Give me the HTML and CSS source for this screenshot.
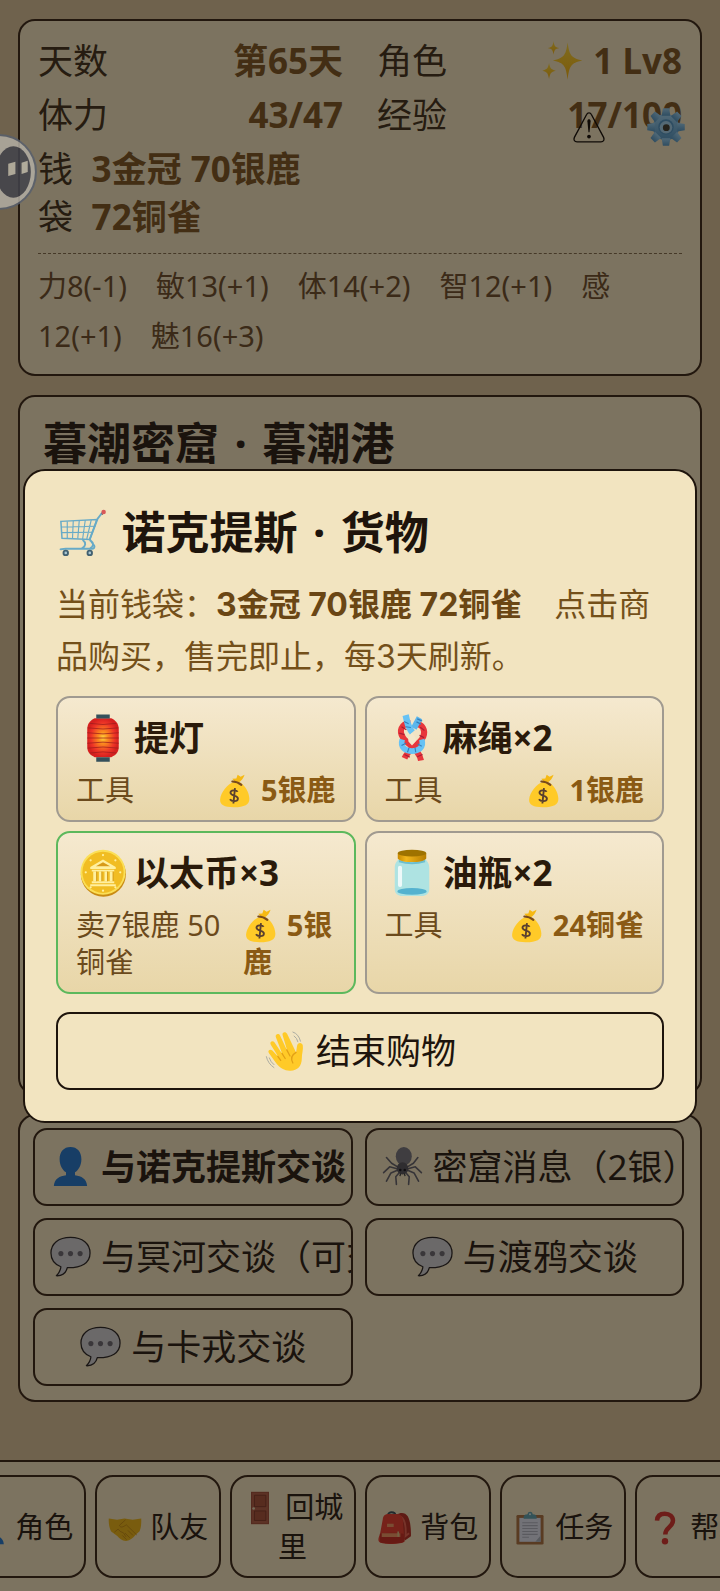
FILE: index.html
```html
<!DOCTYPE html>
<html lang="zh-CN">
<head>
<meta charset="utf-8">
<meta name="viewport" content="width=device-width, initial-scale=1">
<title>诺克提斯 · 货物</title>
<link rel="stylesheet" href="styles.css">
</head>
<body>
<svg class="sprite" aria-hidden="true">
  <defs>
    <linearGradient id="g-star" x1="0" y1="0" x2="0" y2="1"><stop offset="0" stop-color="#ffd83d"/><stop offset="1" stop-color="#f9b515"/></linearGradient>
    <radialGradient id="g-lamp"><stop offset="0" stop-color="#ffd23c"/><stop offset=".3" stop-color="#fb8c1e"/><stop offset=".75" stop-color="#ee3527"/><stop offset="1" stop-color="#d5201f"/></radialGradient>
    <linearGradient id="g-lid" x1="0" y1="0" x2="1" y2="0"><stop offset="0" stop-color="#c98a00"/><stop offset=".3" stop-color="#f2b61c"/><stop offset="1" stop-color="#b57c00"/></linearGradient>
    <linearGradient id="g-gear" x1="0" y1="0" x2="0" y2="1"><stop offset="0" stop-color="#a2d2ee"/><stop offset="1" stop-color="#5d9bc4"/></linearGradient>
  </defs>
  <symbol id="sparkles" viewBox="0 0 128 128">
    <g fill="url(#g-star)">
      <path d="M80 8c5 36 9 49 46 56-37 7-41 20-46 60-5-40-9-53-46-60 37-7 41-20 46-56z"/>
      <path d="M36 3c2 15 4 19 18 22-14 3-16 7-18 21-2-14-4-18-18-21 14-3 16-7 18-22z"/>
      <path d="M22 72c3 15 5 20 21 24-16 4-18 9-21 26-3-17-5-22-21-26 16-4 18-9 21-24z"/>
    </g>
  </symbol>
  <symbol id="gear" viewBox="0 0 128 128">
    <g fill="url(#g-gear)">
      <circle cx="64" cy="64" r="42"/>
      <g id="teeth"><path d="M54 4h20l4 24H50z"/><path d="M54 124h20l4-24H50z"/><path d="M4 54v20l24 4V50z"/><path d="M124 54v20l-24 4V50z"/></g>
      <use href="#teeth" transform="rotate(45 64 64)"/>
    </g>
    <circle cx="64" cy="64" r="25" fill="#5c9ac4"/>
    <circle cx="64" cy="65" r="20" fill="#a9d3ea"/>
    <circle cx="65" cy="66" r="11" fill="#4a4436"/>
  </symbol>
  <symbol id="warning" viewBox="0 0 128 128">
    <path d="M55 17 9 103c-4 9 0 17 10 17h90c10 0 14-8 10-17L73 17c-4-8-14-8-18 0z" fill="none" stroke="currentColor" stroke-width="5"/>
    <path d="M58 42c0-9 12-9 12 0l-4 42h-4z" fill="currentColor"/><circle cx="64" cy="100" r="7" fill="currentColor"/>
  </symbol>
  <symbol id="cart" viewBox="0 0 128 128">
    <g fill="none" stroke="#67aac7" stroke-width="3">
      <path d="M5 33 101 28 82 81 8 78z" stroke-width="4"/>
      <path d="M22 33v45M38 32l-2 47M54 31l-4 48M70 30l-7 50M86 29 74 80M6 48l91-2M7 63l84-1"/>
      <path d="M116 9 103 26 82 81l12 17c2 4-1 8-6 8H18c-7 0-13 0-15 3M63 82c10 8 9 17-2 23M82 83c13 7 10 17 1 22" stroke-width="5"/>
    </g>
    <circle cx="119" cy="8" r="6" fill="#d95858"/><path d="M113 12l4 4" stroke="#703a3a" stroke-width="2"/>
    <g fill="#a9c6d2" stroke="#426070" stroke-width="5"><circle cx="18" cy="117" r="6"/><circle cx="82" cy="117" r="6"/></g>
  </symbol>
  <symbol id="lantern" viewBox="0 0 128 128">
    <path d="M42 11h44c12 5 20 15 20 29v48c0 14-8 22-20 27H42c-12-5-20-13-20-27V40c0-14 8-24 20-29z" fill="url(#g-lamp)"/>
    <g fill="none" stroke="#9e1c1c" stroke-width="2"><path d="M29 25q35 6 70 0M23 37q41 6 82 0M22 50q42 6 84 0M22 64h84M22 78q42-6 84 0M23 91q41-6 82 0M29 104q35-6 70 0"/></g>
    <path d="M46 1h36v11H46zM46 115h36v12H46z" fill="#34505b"/>
  </symbol>
  <symbol id="knot" viewBox="0 0 128 128">
    <path d="M60 24C34 26 29 46 40 63c11 18 43 30 48 61" fill="none" stroke="#e8363c" stroke-width="16"/>
    <path d="M72 28c20-3 29 15 22 33-9 20-37 28-50 57" fill="none" stroke="#e8363c" stroke-width="16"/>
    <path d="M84 10 69 38" fill="none" stroke="#5bb6ec" stroke-width="16"/>
    <path d="M47 3c5 18 4 29 18 46" fill="none" stroke="#66c2f5" stroke-width="17"/>
    <path d="M38 68c-7 22 10 31 26 31s33-9 26-31" fill="none" stroke="#66c2f5" stroke-width="15"/>
    <path d="m78 13 13 6M76 21l12 6M43 20l12 6M47 34l14 2M36 84l12-6M52 102l4-12M74 102l-2-12M90 86l-11-6" stroke="#347fbc" stroke-width="3"/>
    <path d="m30 51 14 4M36 34l13 8M86 35l11 9M84 57l12 6M44 108l14 7M78 114l14-6" stroke="#a91f35" stroke-width="3"/>
    <path d="M64 50c-8 10-12 17-9 24l9 10 9-10c3-7-1-14-9-24z" fill="#f3e7ca"/>
  </symbol>
  <symbol id="coin" viewBox="0 0 128 128">
    <circle cx="65" cy="67" r="60" fill="#c98b13"/><circle cx="64" cy="62" r="60" fill="#fbdf57"/><circle cx="64" cy="62" r="55" fill="#f1bd23"/>
    <path d="M30 48 64 28l34 20v5H30zM30 94h68v5H30zM34 55h60v5H34zM34 86h60v5H34z" fill="#fff0a0"/>
    <path d="M45 46 64 35l19 11z" fill="#d79a18"/>
    <path d="M38 60h8v26h-8zM53 60h7v26h-7zM68 60h7v26h-7zM82 60h8v26h-8z" fill="#fff0a0"/>
    <path d="M47 60v26M61 60v26M76 60v26M91 60v26" stroke="#cc9218" stroke-width="2"/>
    <g fill="#fff0a0"><circle cx="64" cy="16" r="3"/><circle cx="64" cy="111" r="3"/><circle cx="18" cy="62" r="3"/><circle cx="110" cy="62" r="3"/><circle cx="31" cy="30" r="3"/><circle cx="97" cy="30" r="3"/><circle cx="31" cy="102" r="3"/><circle cx="97" cy="102" r="3"/></g>
  </symbol>
  <symbol id="jar" viewBox="0 0 128 128">
    <path d="M27 28h74c4 7 9 10 9 22v57c0 12-9 18-20 18H38c-11 0-20-6-20-18V50c0-12 5-15 9-22z" fill="#aee3e2"/>
    <ellipse cx="64" cy="113" rx="39" ry="9" fill="#54b2cf"/><path d="M29 29q35 13 70 0v6q-35 11-70 0z" fill="#6cbfd0"/>
    <path d="M26 11v14c6 13 70 13 76 0V11z" fill="url(#g-lid)"/><ellipse cx="64" cy="11" rx="38" ry="9" fill="#9e7200"/>
    <path d="M32 50v46" stroke="#fff" stroke-width="11" stroke-linecap="round" opacity=".8"/>
  </symbol>
  <symbol id="money" viewBox="0 0 128 128">
    <path d="M74 34C90 26 96 15 100 3l-15 7-11-7-5 14-15 1 11 14z" fill="#f6b913"/>
    <path d="M59 31C36 36 11 69 8 95c-2 21 16 30 52 30 40 0 59-10 58-33-1-26-17-48-35-60z" fill="#ffca28"/>
    <path d="M54 28q19 0 34 13" fill="none" stroke="#7a4b1c" stroke-width="8" stroke-linecap="round"/>
    <path d="M74 67c-6-8-27-7-27 4 0 13 29 8 28 22-1 12-24 12-30 2M64 53l-6 58" fill="none" stroke="#5a402f" stroke-width="7"/>
  </symbol>
  <symbol id="wave" viewBox="0 0 128 128">
    <path d="M35 104 12 72c-5-8 4-14 11-8l19 20-24-38c-5-9 6-15 12-7l24 36-20-52c-4-10 9-15 13-6l23 49-15-50c-3-10 10-13 14-4l28 58 3-20c1-13 17-12 18-2 2 13-3 25-3 40 0 25-14 38-35 39-18 1-32-7-45-23z" fill="#ffca28"/>
    <path d="m40 82 9 13M53 73l10 16M68 62l10 19M97 70c-14 8-17 20-10 33" fill="none" stroke="#e2a016" stroke-width="4" stroke-linecap="round"/>
    <path d="M86 6q19 6 25 30M90 18q10 7 13 20M4 82q5 23 25 36M13 86q5 15 16 23" fill="none" stroke="#a9aaa0" stroke-width="3"/>
  </symbol>
  <symbol id="bust" viewBox="0 0 128 128">
    <path d="M64 3c21 0 34 15 34 38 0 19-9 34-20 41v9c20 3 36 10 38 34H12c2-24 18-31 38-34v-9C39 75 30 60 30 41 30 18 43 3 64 3z" fill="#2f7dcc"/>
  </symbol>
  <symbol id="spider" viewBox="0 0 128 128">
    <g fill="none" stroke="#6d686f" stroke-width="5" stroke-linecap="round" stroke-linejoin="round"><path d="M50 66 30 54 14 36M47 71 24 65 5 83M48 76 28 84 14 110M55 82 43 96l2 24M78 66l20-12 14-18M81 71l23-6 19 18M80 76l20 8 14 26M73 82l12 14-2 24"/></g>
    <ellipse cx="68" cy="32" rx="25" ry="29" fill="#7f7a80"/><ellipse cx="64" cy="70" rx="18" ry="19" fill="#5f5a60"/>
    <circle cx="57" cy="75" r="4" fill="#211d22"/><circle cx="71" cy="75" r="4" fill="#211d22"/><path d="m58 86-2 8M70 86l2 8" stroke="#444" stroke-width="4"/>
  </symbol>
  <symbol id="speech" viewBox="0 0 128 128">
    <path d="M64 4C26 4 3 24 3 53c0 22 13 36 31 43-1 13-5 19-14 28 20 1 30-9 34-25 45 1 71-15 71-46C125 24 102 4 64 4z" fill="#d6d2d2" stroke="#352d2a" stroke-width="4" stroke-linejoin="round"/>
    <g fill="#746e74"><circle cx="34" cy="55" r="8"/><circle cx="64" cy="55" r="8"/><circle cx="94" cy="55" r="8"/></g>
  </symbol>
  <symbol id="handshake" viewBox="0 0 128 128">
    <path d="M3 28 34 33 62 28l31 5 32-5c1 20-1 36-6 48l-15 13c-9 12-20 21-36 24-16-2-25-9-33-19L12 77C4 62 2 44 3 28z" fill="#f2b91c"/>
    <path d="M65 34 43 54c4 11 15 6 26-2l38 37M93 91 76 74M81 100 65 84M69 107 55 93M25 79l13-11 8 9 12 5 9 14" fill="none" stroke="#c78a18" stroke-width="3" stroke-linecap="round" stroke-linejoin="round"/>
  </symbol>
  <symbol id="door" viewBox="0 0 128 128">
    <path d="M30 3h68v122H30z" fill="#a8553e"/><path d="M34 7h60v114H34z" fill="#b9644a"/><path d="M43 16h43v43H43zM43 75h43v36H43z" fill="#ae593f" stroke="#823b2b" stroke-width="3"/><circle cx="40" cy="66" r="5" fill="#e9d6b0"/>
  </symbol>
  <symbol id="backpack" viewBox="0 0 128 128">
    <path d="M70 14c14-10 33-10 42 6 9 16 13 44 12 75l-24 17-15-60z" fill="#bd3529"/><path d="M86 22c16 10 20 37 18 72l13-10" fill="none" stroke="#ed6753" stroke-width="7"/>
    <path d="M38 15C37 1 65 1 65 15" fill="none" stroke="#40505a" stroke-width="7"/>
    <path d="M18 31c1-14 9-20 22-20h29c13 0 22 6 24 20l7 84c-6 11-87 13-96 1-6-8 0-19 4-31z" fill="#ed4434"/>
    <path d="M7 86q44-8 90 0l2 28c-5 11-83 12-91 3z" fill="#cf3529"/><path d="M14 84h70v14H14zM34 48h25v12H34z" fill="#f49a67"/><path d="M76 77v20" stroke="#e8c68b" stroke-width="6"/>
  </symbol>
  <symbol id="clipboard" viewBox="0 0 128 128">
    <rect x="13" y="15" width="102" height="111" rx="5" fill="#b27645"/><path d="M24 26h80v90H24z" fill="#e4e4ee"/><path d="M104 92v24H84z" fill="#aeb3ba"/>
    <path d="M40 24c0-11 10-11 15-12 1-12 18-12 19 0 5 1 15 1 15 12v5H40z" fill="#66a5b0"/><circle cx="64" cy="12" r="4" fill="#d7edf0"/>
    <path d="M35 44h58M35 55h58M35 66h58M35 77h58M35 88h58M35 99h25" stroke="#b4b5be" stroke-width="4"/>
  </symbol>
  <symbol id="question" viewBox="0 0 128 128">
    <path d="M34 36C35 16 48 10 63 10c19 0 31 11 31 27 0 23-29 25-29 51" fill="none" stroke="#dc3b32" stroke-width="17"/><circle cx="64" cy="114" r="12" fill="#dc3b32"/>
  </symbol>
</svg>

<div class="page">
  <main class="main">
    <div class="card card-prev"></div>

    <section class="card stats">
      <dl class="stat-grid">
        <div class="stat"><dt>天数</dt><dd>第65天</dd></div>
        <div class="stat"><dt>角色</dt><dd><svg class="icon icon-md"><use href="#sparkles"/></svg> 1 Lv8</dd></div>
        <div class="stat"><dt>体力</dt><dd>43/47</dd></div>
        <div class="stat"><dt>经验</dt><dd>17/100</dd></div>
        <div class="stat"><dt>钱袋</dt><dd>3金冠 70银鹿 72铜雀</dd></div>
      </dl>
      <p class="abilities">力8(-1)　敏13(+1)　体14(+2)　智12(+1)　感12(+1)　魅16(+3)</p>
    </section>

    <section class="card scene">
      <h1 class="title">暮潮密窟 <span class="dot">·</span> 暮潮港</h1>
    </section>

    <section class="card actions">
      <button class="btn action action-strong" type="button"><svg class="icon icon-md"><use href="#bust"/></svg> 与诺克提斯交谈</button>
      <button class="btn action" type="button"><svg class="icon icon-md"><use href="#spider"/></svg> 密窟消息（2银）</button>
      <button class="btn action" type="button"><svg class="icon icon-md"><use href="#speech"/></svg> 与冥河交谈（可交易）</button>
      <button class="btn action" type="button"><svg class="icon icon-md"><use href="#speech"/></svg> 与渡鸦交谈</button>
      <button class="btn action" type="button"><svg class="icon icon-md"><use href="#speech"/></svg> 与卡戎交谈</button>
    </section>
  </main>

  <nav class="tabbar">
    <button class="btn tab" type="button"><svg class="icon icon-sm"><use href="#bust"/></svg> 角色</button>
    <button class="btn tab" type="button"><svg class="icon icon-sm"><use href="#handshake"/></svg> 队友</button>
    <button class="btn tab" type="button"><svg class="icon icon-sm"><use href="#door"/></svg> 回城里</button>
    <button class="btn tab" type="button"><svg class="icon icon-sm"><use href="#backpack"/></svg> 背包</button>
    <button class="btn tab" type="button"><svg class="icon icon-sm"><use href="#clipboard"/></svg> 任务</button>
    <button class="btn tab" type="button"><svg class="icon icon-sm"><use href="#question"/></svg> 帮助</button>
  </nav>

  <div class="tools">
    <button class="tool" type="button" aria-label="警告"><svg class="tool-warning"><use href="#warning"/></svg></button>
    <button class="tool" type="button" aria-label="设置"><svg class="tool-gear"><use href="#gear"/></svg></button>
  </div>
</div>

<div class="overlay">
  <section class="modal" role="dialog" aria-modal="true" aria-labelledby="shop-title">
    <h2 class="title" id="shop-title"><svg class="icon icon-lg"><use href="#cart"/></svg> 诺克提斯 <span class="dot">·</span> 货物</h2>
    <p class="hint">当前钱袋：<strong>3金冠 70银鹿 72铜雀</strong>　点击商品购买，售完即止，每3天刷新。</p>
    <div class="goods">
      <button class="item" type="button">
        <span class="item-name"><svg class="icon icon-lg"><use href="#lantern"/></svg>提灯</span>
        <span class="item-meta"><span>工具</span><span class="price"><svg class="icon icon-sm"><use href="#money"/></svg> 5银鹿</span></span>
      </button>
      <button class="item" type="button">
        <span class="item-name"><svg class="icon icon-lg"><use href="#knot"/></svg>麻绳×2</span>
        <span class="item-meta"><span>工具</span><span class="price"><svg class="icon icon-sm"><use href="#money"/></svg> 1银鹿</span></span>
      </button>
      <button class="item item-uncommon" type="button">
        <span class="item-name"><svg class="icon icon-lg"><use href="#coin"/></svg>以太币×3</span>
        <span class="item-meta"><span>卖7银鹿 50铜雀</span><span class="price"><svg class="icon icon-sm"><use href="#money"/></svg> 5银鹿</span></span>
      </button>
      <button class="item" type="button">
        <span class="item-name"><svg class="icon icon-lg"><use href="#jar"/></svg>油瓶×2</span>
        <span class="item-meta"><span>工具</span><span class="price"><svg class="icon icon-sm"><use href="#money"/></svg> 24铜雀</span></span>
      </button>
    </div>
    <button class="btn leave" type="button"><svg class="icon icon-md"><use href="#wave"/></svg> 结束购物</button>
  </section>
</div>

<button class="bubble" type="button" aria-label="悬浮助手">
  <svg class="bubble-face" viewBox="0 0 76 76">
    <circle cx="38" cy="38" r="36" fill="#b3aea4" stroke="#59606d" stroke-width="2"/>
    <ellipse cx="52" cy="38" rx="17" ry="25" fill="#42434c"/>
    <path d="m47 30 7-2v12l-7 2zM60 29l6-2v11l-6 2z" fill="#bab5a6"/>
  </svg>
</button>
</body>
</html>
```

FILE: styles.css
```css
:root {
  --page: #dec49a;
  --card: #f8e6c0;
  --paper: #f2e4c0;
  --line: #442f1d;
  --ink: #1e140c;
  --brown: #74501a;
}

* {
  box-sizing: border-box;
}

body {
  margin: 0;
  background: var(--page);
  color: var(--ink);
  font-family: "Noto Sans", "Noto Sans CJK SC", sans-serif;
  font-size: 35px;
}

h1, h2, p, dl, dd {
  margin: 0;
}

button {
  font: inherit;
  color: inherit;
  cursor: pointer;
}

.sprite {
  position: absolute;
  width: 0;
  height: 0;
}

.page {
  position: relative;
  display: flex;
  flex-direction: column;
  min-height: 100vh;
  overflow: hidden;
}

.main {
  display: flex;
  flex-direction: column;
  gap: 19px;
  padding: 0 18px 58px;
}

.card {
  border: 2px solid var(--line);
  border-radius: 17px;
  background: var(--card);
}

.card-prev {
  height: 36px;
  margin-top: -36px;
}

/* icons */

.icon {
  display: inline-block;
  flex: none;
  vertical-align: -2px;
  margin: -6px 0;
}

.icon-sm {
  width: 36px;
  height: 36px;
  padding: 1px;
}

.icon-md {
  width: 43px;
  height: 43px;
  padding: 1px;
}

.icon-lg {
  width: 54px;
  height: 54px;
  padding: 3px;
  vertical-align: -5px;
}

/* character stats */

.stats {
  padding: 16px 18px 13px;
}

.stat-grid {
  display: grid;
  grid-template-columns: 1fr 1fr;
  gap: 6px 34px;
  line-height: 48px;
}

.stat {
  display: flex;
  justify-content: space-between;
  color: #4c3822;
}

.stat dd {
  color: #865c28;
  font-weight: 700;
}

.abilities {
  margin-top: 12px;
  padding-top: 7px;
  border-top: 1px dashed #8c7350;
  color: #765430;
  font-size: 29px;
  line-height: 50px;
}

/* scene */

.title {
  font-size: 44px;
  font-weight: 700;
  line-height: 60px;
}

.dot {
  padding: 0 4px;
}

.scene {
  min-height: 700px;
  padding: 16px 23px;
  color: #35261a;
}

/* actions */

.actions {
  display: grid;
  grid-template-columns: 1fr 1fr;
  gap: 12px;
  padding: 12px 16px 14px 13px;
}

.btn {
  border: 2px solid var(--line);
  border-radius: 14px;
  background: transparent;
  line-height: 48px;
  text-align: center;
}

.action {
  min-width: 0;
  height: 78px;
  padding: 0 14px;
  overflow: hidden;
  color: #35261a;
  white-space: nowrap;
}

.action-strong {
  font-weight: 700;
}

/* bottom tabs */

.tabbar {
  display: flex;
  justify-content: center;
  gap: 9px;
  margin-top: auto;
  padding: 13px 0 14px;
  border-top: 2px solid var(--line);
  background: var(--card);
}

.tab {
  flex: none;
  width: 126px;
  min-height: 103px;
  padding: 0 8px;
  border-radius: 18px;
  color: #35261a;
  font-size: 29px;
  line-height: 40px;
}

/* floating tools */

.tools {
  position: absolute;
  top: 107px;
  right: 34px;
  display: flex;
  align-items: center;
  gap: 40px;
}

.tool {
  display: flex;
  padding: 0;
  border: 0;
  background: none;
}

.tool-warning {
  width: 34px;
  height: 34px;
}

.tool-gear {
  width: 40px;
  height: 40px;
}

/* shop dialog */

.overlay {
  position: fixed;
  inset: 0;
  display: flex;
  align-items: center;
  justify-content: center;
  padding: 23px;
  background: rgba(0, 0, 0, 0.5);
}

.modal {
  width: 100%;
  padding: 31px;
  border: 2px solid var(--ink);
  border-radius: 22px;
  background: var(--paper);
}

.hint {
  margin: 17px 0 13px;
  color: var(--brown);
  font-family: Inter, "Noto Sans CJK SC", sans-serif;
  font-size: 32px;
  line-height: 52px;
}

.hint strong {
  color: #6a4614;
}

.goods {
  display: grid;
  grid-template-columns: 1fr 1fr;
  gap: 9px;
}

.item {
  display: flex;
  flex-direction: column;
  gap: 7px;
  min-width: 0;
  padding: 14px 18px 12px;
  border: 2px solid #a09a90;
  border-radius: 14px;
  background: linear-gradient(#f5e9cf, #e8d6a8);
  text-align: left;
}

.item-uncommon {
  border-color: #5cb85c;
}

.item-name {
  display: flex;
  align-items: center;
  gap: 4px;
  color: #2a1a0a;
  font-weight: 700;
  line-height: 52px;
}

.item-meta {
  display: flex;
  justify-content: space-between;
  gap: 9px;
  width: 100%;
  color: #6b4a1c;
  font-size: 29px;
  line-height: 37px;
}

.price {
  color: #8a5a14;
  font-weight: 700;
}

.leave {
  display: block;
  width: 100%;
  height: 78px;
  margin-top: 18px;
  border-color: var(--ink);
}

/* edge assistant */

.bubble {
  position: fixed;
  top: 133px;
  left: -40px;
  padding: 0;
  border: 0;
  background: none;
  opacity: 0.85;
}

.bubble-face {
  display: block;
  width: 78px;
  height: 78px;
}
```
